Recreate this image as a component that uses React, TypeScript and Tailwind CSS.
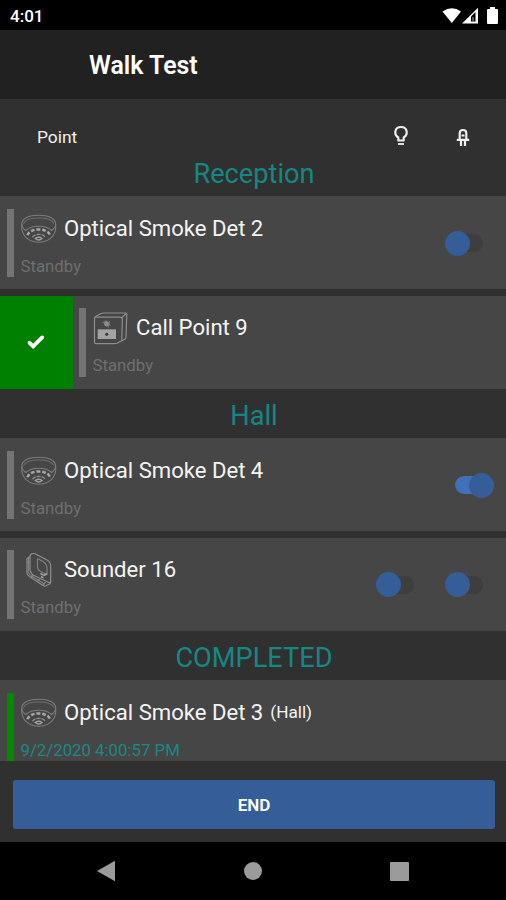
import { clsx } from "clsx";

type Kind = "smoke" | "call" | "sounder";

type Point = {
  name: string;
  kind: Kind;
  status: string;
  zone?: string;
  done?: boolean;
  swiped?: boolean;
  toggles: boolean[];
};

const RECEPTION: Point[] = [
  { name: "Optical Smoke Det 2", kind: "smoke", status: "Standby", toggles: [false] },
  { name: "Call Point 9", kind: "call", status: "Standby", swiped: true, toggles: [] },
];

const HALL: Point[] = [
  { name: "Optical Smoke Det 4", kind: "smoke", status: "Standby", toggles: [true] },
  { name: "Sounder 16", kind: "sounder", status: "Standby", toggles: [false, false] },
];

const COMPLETED: Point[] = [
  {
    name: "Optical Smoke Det 3",
    kind: "smoke",
    status: "9/2/2020 4:00:57 PM",
    zone: "(Hall)",
    done: true,
    toggles: [],
  },
];

function SmokeIcon() {
  return (
    <svg viewBox="0 0 36 36" className="h-9 w-9" fill="none" stroke="#7c7c7c" strokeWidth="1.1">
      <path d="M.8 13C.8 7.500 8 4.200 17.700 4.200S34.700 7.500 34.700 13c0 3.500-2 5-4 6.500C27.500 16.500 23 15.200 17.700 15.200S8 16.500 4.700 19.500C2.700 18 .8 16.500.8 13z" />
      <path d="M2.500 12.500C4.500 8.500 10.500 7 17.700 7S31 8.500 33 12.500" stroke="#6e6e6e" />
      <path d="M.8 13v4.500C1.500 25.500 8.500 31.200 17.700 31.200S34 25.500 34.700 17.500V13" />
      <path d="M6.500 24.300C8.500 16.500 27 16.500 29 24.300" stroke="#a6a6a6" strokeWidth="2.500" strokeDasharray="3.800 1.800" />
      <path d="M11.500 26.300c1.500-4 11-4 12.500 0" stroke="#8e8e8e" strokeWidth="1.300" strokeDasharray="4 1" />
      <path d="M14.300 27.500q3.400-2.500 6.800 0-3.400 3-6.800 0z" stroke="#a0a0a0" strokeWidth="1.300" />
    </svg>
  );
}

function CallPointIcon() {
  return (
    <svg viewBox="0 0 36 36" className="h-9 w-9" fill="none" stroke="#8d8d8d" strokeWidth="1.200">
      <path
        d="M1.500 8.500Q1.500 7 3 6.300L8 3.500Q9 3 10.500 3H32.500q1.300 0 1.300 1.200L33 27.500q0 1.200-1.300 1.700L24 33.300q-1 .4-2.500.4H3q-1.500 0-1.500-1.500z"
        strokeLinejoin="round"
      />
      <path d="M2 7.200h24.500q2.800 0 2.800 2.300l-.5 21M29 7.500l4-3.800" />
      <path d="M4.700 19.300h18.300v9.700H4.700z" fill="#a3a3a3" stroke="none" />
      <circle cx="13.700" cy="24.300" r="1.600" fill="#3d3d3d" stroke="none" />
      <path d="m9.500 13 3.500-2 4.500 4.500M16.500 11l-1.500 6.500" stroke="#777777" />
      <circle cx="13.500" cy="14" r="2.400" fill="#8d8d8d" stroke="none" />
    </svg>
  );
}

function SounderIcon() {
  return (
    <svg viewBox="0 0 36 36" className="h-9 w-9" fill="none" stroke="#8d8d8d" strokeWidth="1.200" strokeLinejoin="round">
      <path d="M9 5Q9 1.300 12.500 1.500q1.500.1 3 1L26 8q3.700 2 3.700 6v14.500q0 3-2.500 1.800L13 23.500Q9.300 21.500 9 17z" />
      <path d="M9 4.500 6 6.500v14.500q0 2 2.500 3.500l13.500 9q1.500 1 3 .3l4-2q.7-.5.7-3" />
      <path d="M7.500 6v14q.5 2.500 3 4l13 8M6 11l3-1.500" stroke="#808080" />
      <path d="m10 25.500 2-2M16.500 29.500l2-2.500M22 33.500l2.500-3.500" />
      <path d="M16.500 6.500v8.500q0 3 3 4.500l7 3M16.500 6.500 22 9.500q4 2.500 4 7v6" stroke="#808080" />
      <path d="m19.500 21.500 3.500 1.800 3-1.300M20 24.500l2.500 1.300" stroke="#a3a3a3" strokeWidth="1.500" />
    </svg>
  );
}

const ICONS = { smoke: SmokeIcon, call: CallPointIcon, sounder: SounderIcon };

function Toggle({ on }: { on: boolean }) {
  return (
    <button
      role="switch"
      aria-checked={on}
      className={clsx("flex h-[25px] w-[39px] items-center", on ? "justify-end" : "justify-start")}
    >
      <span
        className={clsx(
          "flex h-[18px] items-center rounded-full",
          on ? "w-[39px] justify-end bg-[#4070b8]" : "w-[38px] justify-start bg-[#3e3e3e]",
        )}
      >
        <span className="h-[25px] w-[25px] shrink-0 rounded-full bg-[#355e98]" />
      </span>
    </button>
  );
}

function PointRow({ point }: { point: Point }) {
  const Icon = ICONS[point.kind];
  return (
    <li className="flex h-[93px] bg-[#464646]">
      {point.swiped && (
        <div className="flex w-[72.500px] shrink-0 items-center justify-center bg-[#008000]">
          <svg viewBox="0 0 20 16" className="h-4 w-5" fill="none" stroke="#ffffff" strokeWidth="3.800" strokeLinecap="round">
            <path d="m3.500 8.800 3.700 3.600 9-9" />
          </svg>
        </div>
      )}
      <div className={clsx("flex min-w-0 flex-1 pt-[12.500px]", point.swiped ? "pl-[6.500px]" : "pl-[7px]")}>
        <div className={clsx("h-[68.500px] w-[7px] shrink-0", point.done ? "bg-[#008c00]" : "bg-[#747474]")} />
        <div className="flex-1 pl-[6.500px]">
          <div className="flex h-10 items-center">
            <Icon />
            <span className="ml-[7.500px] whitespace-nowrap text-[22.100px] text-[#f4f4f4]">{point.name}</span>
            {point.zone && <span className="ml-[7px] text-[17.200px] text-[#f4f4f4]">{point.zone}</span>}
          </div>
          <p className={clsx("mt-[5px] text-[16.800px] leading-6", point.done ? "text-[#1a8985]" : "text-[#6f6f6f]")}>
            {point.status}
          </p>
        </div>
        <div className="flex h-[69px] items-center gap-[30px] pr-[22px] has-aria-checked:pr-3">
          {point.toggles.map((on, i) => (
            <Toggle key={i} on={on} />
          ))}
        </div>
      </div>
    </li>
  );
}

function Section({ title, points }: { title: string; points: Point[] }) {
  return (
    <section>
      <h2 className="flex h-[49.500px] items-center justify-center pl-[2px] pt-[6px] text-[27.200px] text-[#168783]">
        {title}
      </h2>
      <ul className="flex flex-col gap-[6.500px]">
        {points.map((p) => (
          <PointRow key={p.name} point={p} />
        ))}
      </ul>
    </section>
  );
}

function StatusBar() {
  return (
    <div className="flex h-[30px] shrink-0 items-center bg-black pl-[10px] pr-[8px] text-white">
      <span className="flex-1 pt-[3px] text-[17px] font-medium">4:01</span>
      <svg viewBox="0 0 20 17" className="h-[17px] w-5" fill="#ffffff">
        <path d="M.5 4.500Q10-2 19 4.500L9.800 16z" />
      </svg>
      <svg viewBox="0 0 17 17" className="h-[17px] w-[17px]">
        <path d="M0 16.500 16 .8v15.700z" fill="#ffffff" />
        <path d="M9 9.500 13.500 5v9.500H9z" fill="#000000" />
        <path d="M10 10h2v4h-2z" fill="#555555" />
      </svg>
      <svg viewBox="0 0 11 17" className="ml-2 h-[17px] w-[11px]" fill="#ffffff">
        <path d="M3 0h5v2h2q1 0 1 1v13q0 1-1 1H1q-1 0-1-1V3q0-1 1-1h2z" />
      </svg>
    </div>
  );
}

export default function App() {
  return (
    <div className="flex h-[900px] w-[506px] flex-col overflow-hidden bg-[#303030] font-['Roboto',sans-serif]">
      <StatusBar />
      <header className="flex h-[69px] shrink-0 items-center bg-[#212121] pl-[89px]">
        <h1 className="pt-[2px] text-[24.900px] font-semibold text-white">Walk Test</h1>
      </header>

      <div className="flex h-[47.500px] shrink-0 items-center pl-[37px] pr-[36px] pt-[27px] text-[#f0f0f0]">
        <span className="flex-1 pt-[2px] text-[17.400px]">Point</span>
        <svg viewBox="0 0 16 22" className="h-[22px] w-4" fill="none" stroke="currentColor" strokeWidth="2.200">
          <path d="M5.300 15.500v-3C.5 9.500 1.500 2 8 2s7.500 7.500 2.700 10.500v3z" strokeLinejoin="round" />
          <path d="M5 19h6" strokeWidth="1.800" />
        </svg>
        <svg viewBox="0 0 14 20" className="ml-[47px] mt-[3px] h-5 w-[14px]" fill="none" stroke="currentColor" strokeWidth="2.200">
          <path d="M3.700 12V5.300q0-3.300 3.300-3.300t3.300 3.300V12M.8 11.800h12.400M5 12v6M9 12v6M5.500 7.500h3" />
        </svg>
      </div>

      <main className="min-h-0 flex-1 overflow-hidden">
        <Section title="Reception" points={RECEPTION} />
        <Section title="Hall" points={HALL} />
        <Section title="COMPLETED" points={COMPLETED} />
      </main>

      <footer className="h-[81px] shrink-0 pl-[13px] pr-[11px] pt-[19px]">
        <button className="h-[49px] w-full rounded-[3px] bg-[#355e98] pt-[2px] text-[17px] font-semibold text-white">
          END
        </button>
      </footer>

      <nav className="flex h-[58px] shrink-0 items-center justify-between bg-black pl-[96px] pr-[97px]">
        <svg viewBox="0 0 20 22" className="h-[22px] w-5" fill="#9b9b9b">
          <path d="M1 11 19 .8v20.400z" />
        </svg>
        <span className="h-[18px] w-[18px] rounded-full bg-[#9b9b9b]" />
        <span className="h-[19px] w-[19px] rounded-[1px] bg-[#9b9b9b]" />
      </nav>
    </div>
  );
}
